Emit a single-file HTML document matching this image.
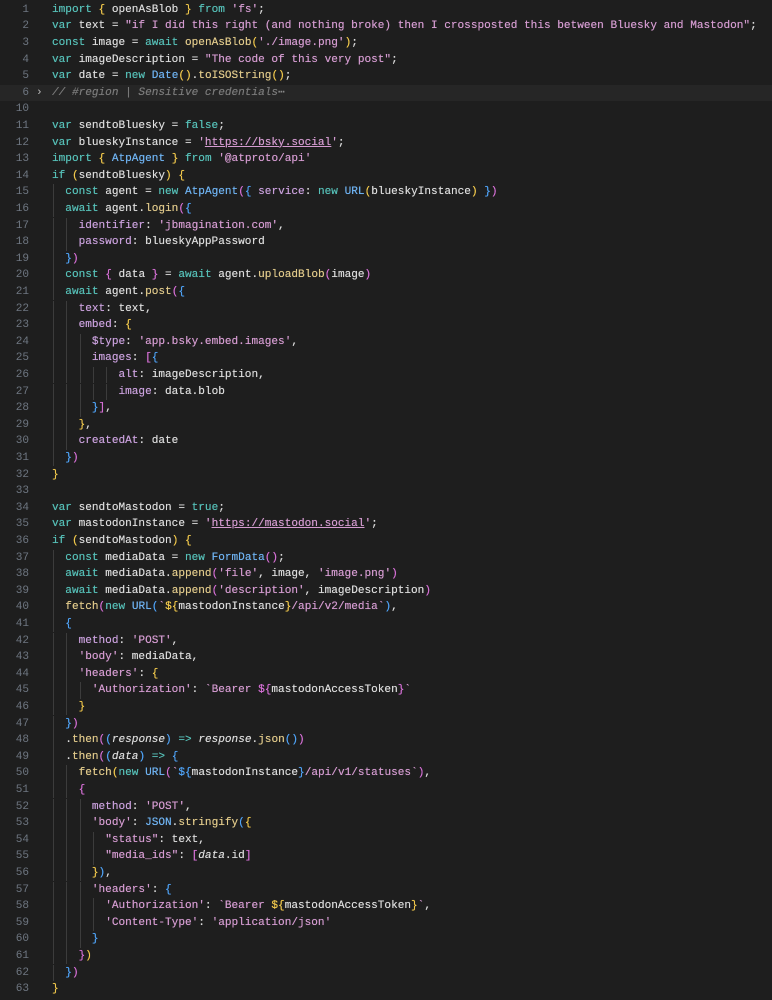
<!DOCTYPE html>
<html><head><meta charset="utf-8"><style>
body{margin:0;background:#1e1e1e;width:772px;height:1000px;overflow:hidden;font-family:"Liberation Mono",monospace;font-size:11.08px;}
.ln{position:absolute;left:0;width:29px;text-align:right;color:#6e7681;}
.cd{position:absolute;left:52px;white-space:pre;color:#dcdcdc;text-shadow:0 0 0.4px currentColor;}
.r{position:absolute;left:0;width:772px;height:16.6px;line-height:16.6px;}
.gd{position:absolute;top:0;width:1px;height:16.6px;background:#3c3c3c;}
.k{color:#56c0b8}.s{color:#d49bd0}.f{color:#e0c98a}.c{color:#6fb3f2}.g{color:#f2c94c}.p{color:#d670d6}.b{color:#4fa3f7}
.m{color:#7a7a7a;font-style:italic}.pr{color:#c9a0dc}.u{text-decoration:underline}.i{font-style:italic}
.fold{background:#262626}
</style></head><body>
<div id="w"></div>
<script>
var L=[
[1,'<span class=k>import</span> <span class=g>{</span> openAsBlob <span class=g>}</span> <span class=k>from</span> <span class=s>\'fs\'</span>;'],
[2,'<span class=k>var</span> text = <span class=s>"if I did this right (and nothing broke) then I crossposted this between Bluesky and Mastodon"</span>;'],
[3,'<span class=k>const</span> image = <span class=k>await</span> <span class=f>openAsBlob</span><span class=g>(</span><span class=s>\'./image.png\'</span><span class=g>)</span>;'],
[4,'<span class=k>var</span> imageDescription = <span class=s>"The code of this very post"</span>;'],
[5,'<span class=k>var</span> date = <span class=k>new</span> <span class=c>Date</span><span class=g>()</span>.<span class=f>toISOString</span><span class=g>()</span>;'],
[6,'<span class=m>// #region | Sensitive credentials</span><span style="color:#888">⋯</span>'],
[10,''],
[11,'<span class=k>var</span> sendtoBluesky = <span class=k>false</span>;'],
[12,'<span class=k>var</span> blueskyInstance = <span class=s>\'<span class=u>https://bsky.social</span>\'</span>;'],
[13,'<span class=k>import</span> <span class=g>{</span> <span class=c>AtpAgent</span> <span class=g>}</span> <span class=k>from</span> <span class=s>\'@atproto/api\'</span>'],
[14,'<span class=k>if</span> <span class=g>(</span>sendtoBluesky<span class=g>)</span> <span class=g>{</span>'],
[15,'  <span class=k>const</span> agent = <span class=k>new</span> <span class=c>AtpAgent</span><span class=p>(</span><span class=b>{</span> <span class=pr>service</span>: <span class=k>new</span> <span class=c>URL</span><span class=g>(</span>blueskyInstance<span class=g>)</span> <span class=b>}</span><span class=p>)</span>'],
[16,'  <span class=k>await</span> agent.<span class=f>login</span><span class=p>(</span><span class=b>{</span>'],
[17,'    <span class=pr>identifier</span>: <span class=s>\'jbmagination.com\'</span>,'],
[18,'    <span class=pr>password</span>: blueskyAppPassword'],
[19,'  <span class=b>}</span><span class=p>)</span>'],
[20,'  <span class=k>const</span> <span class=p>{</span> data <span class=p>}</span> = <span class=k>await</span> agent.<span class=f>uploadBlob</span><span class=p>(</span>image<span class=p>)</span>'],
[21,'  <span class=k>await</span> agent.<span class=f>post</span><span class=p>(</span><span class=b>{</span>'],
[22,'    <span class=pr>text</span>: text,'],
[23,'    <span class=pr>embed</span>: <span class=g>{</span>'],
[24,'      <span class=pr>$type</span>: <span class=s>\'app.bsky.embed.images\'</span>,'],
[25,'      <span class=pr>images</span>: <span class=p>[</span><span class=b>{</span>'],
[26,'          <span class=pr>alt</span>: imageDescription,'],
[27,'          <span class=pr>image</span>: data.blob'],
[28,'      <span class=b>}</span><span class=p>]</span>,'],
[29,'    <span class=g>}</span>,'],
[30,'    <span class=pr>createdAt</span>: date'],
[31,'  <span class=b>}</span><span class=p>)</span>'],
[32,'<span class=g>}</span>'],
[33,''],
[34,'<span class=k>var</span> sendtoMastodon = <span class=k>true</span>;'],
[35,'<span class=k>var</span> mastodonInstance = <span class=s>\'<span class=u>https://mastodon.social</span>\'</span>;'],
[36,'<span class=k>if</span> <span class=g>(</span>sendtoMastodon<span class=g>)</span> <span class=g>{</span>'],
[37,'  <span class=k>const</span> mediaData = <span class=k>new</span> <span class=c>FormData</span><span class=p>()</span>;'],
[38,'  <span class=k>await</span> mediaData.<span class=f>append</span><span class=p>(</span><span class=s>\'file\'</span>, image, <span class=s>\'image.png\'</span><span class=p>)</span>'],
[39,'  <span class=k>await</span> mediaData.<span class=f>append</span><span class=p>(</span><span class=s>\'description\'</span>, imageDescription<span class=p>)</span>'],
[40,'  <span class=f>fetch</span><span class=p>(</span><span class=k>new</span> <span class=c>URL</span><span class=b>(</span><span class=s>`</span><span class=g>${</span>mastodonInstance<span class=g>}</span><span class=s>/api/v2/media`</span><span class=b>)</span>,'],
[41,'  <span class=b>{</span>'],
[42,'    <span class=pr>method</span>: <span class=s>\'POST\'</span>,'],
[43,'    <span class=s>\'body\'</span>: mediaData,'],
[44,'    <span class=s>\'headers\'</span>: <span class=g>{</span>'],
[45,'      <span class=s>\'Authorization\'</span>: <span class=s>`Bearer </span><span class=p>${</span>mastodonAccessToken<span class=p>}</span><span class=s>`</span>'],
[46,'    <span class=g>}</span>'],
[47,'  <span class=b>}</span><span class=p>)</span>'],
[48,'  .<span class=f>then</span><span class=p>(</span><span class=b>(</span><span class=i>response</span><span class=b>)</span> <span class=k>=&gt;</span> <span class=i>response</span>.<span class=f>json</span><span class=b>()</span><span class=p>)</span>'],
[49,'  .<span class=f>then</span><span class=p>(</span><span class=b>(</span><span class=i>data</span><span class=b>)</span> <span class=k>=&gt;</span> <span class=b>{</span>'],
[50,'    <span class=f>fetch</span><span class=g>(</span><span class=k>new</span> <span class=c>URL</span><span class=p>(</span><span class=s>`</span><span class=b>${</span>mastodonInstance<span class=b>}</span><span class=s>/api/v1/statuses`</span><span class=p>)</span>,'],
[51,'    <span class=p>{</span>'],
[52,'      <span class=pr>method</span>: <span class=s>\'POST\'</span>,'],
[53,'      <span class=s>\'body\'</span>: <span class=c>JSON</span>.<span class=f>stringify</span><span class=b>(</span><span class=g>{</span>'],
[54,'        <span class=s>"status"</span>: text,'],
[55,'        <span class=s>"media_ids"</span>: <span class=p>[</span><span class=i>data</span>.id<span class=p>]</span>'],
[56,'      <span class=g>}</span><span class=b>)</span>,'],
[57,'      <span class=s>\'headers\'</span>: <span class=b>{</span>'],
[58,'        <span class=s>\'Authorization\'</span>: <span class=s>`Bearer </span><span class=g>${</span>mastodonAccessToken<span class=g>}</span><span class=s>`</span>,'],
[59,'        <span class=s>\'Content-Type\'</span>: <span class=s>\'application/json\'</span>'],
[60,'      <span class=b>}</span>'],
[61,'    <span class=p>}</span><span class=g>)</span>'],
[62,'  <span class=b>}</span><span class=p>)</span>'],
[63,'<span class=g>}</span>']
];
var h='';
L.forEach(function(l,i){
 var top=1.7+i*16.6;
 var sp=(l[1].match(/^ */)[0].length);
 var lv=Math.floor(sp/2);
 if(l[1]==='' && (l[0]==33||l[0]==10)) lv=0;
 var g='';
 for(var j=0;j<lv;j++) g+='<span class=gd style="left:'+(53+j*13.3)+'px"></span>';
 h+='<div class="r'+(l[0]==6?' fold':'')+'" style="top:'+top+'px">'+g+'<span class=ln>'+l[0]+'</span>'+(l[0]==6?'<span style="position:absolute;left:36px;color:#bbb">›</span>':'')+'<span class=cd>'+l[1]+'</span></div>';
});
document.getElementById('w').innerHTML=h;
</script>
</body></html>
